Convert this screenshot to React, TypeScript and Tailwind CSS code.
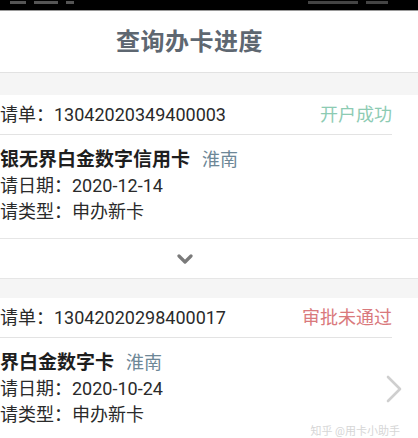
import React from 'react';

type Application = {
  no: string;
  status: string;
  statusColor: string;
  card: string;
  city: string;
  date: string;
  kind: string;
};

const apps: Application[] = [
  {
    no: '13042020349400003',
    status: '开户成功',
    statusColor: 'text-[#8dcbb3]',
    card: '银无界白金数字信用卡',
    city: '淮南',
    date: '2020-12-14',
    kind: '申办新卡',
  },
  {
    no: '13042020298400017',
    status: '审批未通过',
    statusColor: 'text-[#d9797c]',
    card: '界白金数字卡',
    city: '淮南',
    date: '2020-10-24',
    kind: '申办新卡',
  },
];

const ChevronDown = () => (
  <svg width="16" height="10" viewBox="0 0 16 10" fill="none">
    <path d="M2 2l6 6 6-6" stroke="#7a7a7a" strokeWidth="3.2" strokeLinecap="round" strokeLinejoin="round" />
  </svg>
);

const ChevronRight = () => (
  <svg width="16" height="28" viewBox="0 0 16 28" fill="none">
    <path d="M2 2l12 12L2 26" stroke="#cfcfcf" strokeWidth="2.6" strokeLinecap="round" strokeLinejoin="round" />
  </svg>
);

const AppCard: React.FC<{ app: Application; expand?: boolean; arrow?: boolean }> = ({ app, expand, arrow }) => (
  <div className="bg-white">
    <div className="pr-[26px]">
      <div className="flex h-[40px] items-center justify-between border-b border-[#e3e3e3]">
        <span className="text-[18px] text-[#2a2a2a]">请单：{app.no}</span>
        <span className={`text-[18px] ${app.statusColor}`}>{app.status}</span>
      </div>
    </div>
    <div className="flex items-center pt-[12px] pb-[13px] pr-[16px]">
      <div className="flex-1 text-[18px] leading-[26px] text-[#2a2a2a]">
        <div className="flex items-center gap-[12px]">
          <span className="text-[19px] font-bold text-[#1e1e1e]">{app.card}</span>
          <span className="text-[#6d8797]">{app.city}</span>
        </div>
        <div>请日期：{app.date}</div>
        <div>请类型：{app.kind}</div>
      </div>
      {arrow && <ChevronRight />}
    </div>
    {expand && (
      <div className="flex h-[41px] items-center justify-center border-t border-b border-[#e6e6e6] pr-[48px]">
        <ChevronDown />
      </div>
    )}
  </div>
);

export default function App() {
  return (
    <div
      className="h-[438px] w-[418px] overflow-hidden bg-[#f5f5f5]"
      style={{ fontFamily: 'Roboto, "Noto Sans CJK SC", sans-serif' }}
    >
      {/* status bar */}
      <div className="flex h-[11px] items-start justify-between border-b border-[#9a9a9a] bg-black px-[10px] pt-[1px]">
        <div className="flex gap-[8px]">
          <span className="h-[3px] w-[16px] bg-[#555]" />
          <span className="h-[3px] w-[24px] bg-[#555]" />
          <span className="h-[3px] w-[8px] bg-[#555]" />
        </div>
        <div className="flex gap-[8px] pr-[20px]">
          <span className="h-[3px] w-[50px] bg-[#444]" />
          <span className="h-[3px] w-[22px] bg-[#444]" />
        </div>
      </div>

      <header className="flex h-[62px] items-center border-b border-[#e2e2e2] bg-white pl-[116px]">
        <h1 className="text-[24px] font-bold tracking-[0.5px] text-[#5e6771]">查询办卡进度</h1>
      </header>

      <div className="h-[22px]" />
      <AppCard app={apps[0]} expand />
      <div className="h-[19px]" />
      <AppCard app={apps[1]} arrow />

      <div className="-mt-[16px] pr-[18px] text-right text-[11px] leading-[13px] text-[#d6d6d6]">知乎 @用卡小助手</div>
    </div>
  );
}
